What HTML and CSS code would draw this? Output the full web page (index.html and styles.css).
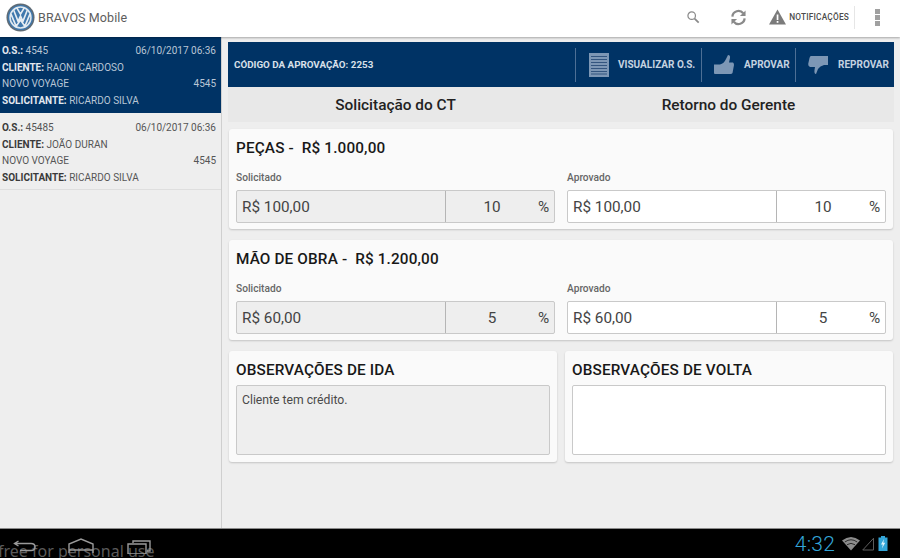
FILE: index.html
```html
<!DOCTYPE html>
<html lang="pt">
<head>
<meta charset="utf-8">
<title>BRAVOS Mobile</title>
<link rel="stylesheet" href="styles.css">
</head>
<body>
<div class="screen">
  <header class="topbar">
    <svg class="logo" width="29" height="29" viewBox="0 0 30 30">
      <circle cx="15" cy="15" r="14.5" fill="#5f6b75"/>
      <circle cx="15" cy="15" r="13" fill="#3f78ad"/>
      <circle cx="15" cy="15" r="10.8" fill="none" stroke="#dfe8ef" stroke-width="1.6"/>
      <path d="M8 7.5 L12.5 19 L15 13.5 L17.5 19 L22 7.5 M11 4.8 L15 11.5 L19 4.8 M5.2 11.5 L10.5 24 L15 17.5 L19.5 24 L24.8 11.5" fill="none" stroke="#e6edf3" stroke-width="1.7"/>
    </svg>
    <span class="apptitle">BRAVOS Mobile</span>
    <div class="actions">
      <svg class="a-search" width="14" height="14" viewBox="0 0 16 16"><circle cx="6.5" cy="6.5" r="4.3" fill="none" stroke="#8a8a8a" stroke-width="1.4"/><path d="M9.8 9.8 L14.5 14.5" stroke="#8a8a8a" stroke-width="2"/></svg>
      <svg class="a-sync" width="17" height="17" viewBox="0 0 18 18"><path d="M2.5 8 A6.5 6.5 0 0 1 14 4.5" fill="none" stroke="#8a8a8a" stroke-width="2.4"/><path d="M16.5 1.5 V7.5 H10.5 Z" fill="#8a8a8a"/><path d="M15.5 10 A6.5 6.5 0 0 1 4 13.5" fill="none" stroke="#8a8a8a" stroke-width="2.4"/><path d="M1.5 16.5 V10.5 H7.5 Z" fill="#8a8a8a"/></svg>
      <svg class="a-warn" width="17" height="16" viewBox="0 0 17 16"><path d="M8.5 0.5 L17 15.5 H0 Z" fill="#7b7b7b"/><rect x="7.7" y="5.5" width="1.7" height="5.5" fill="#fff"/><rect x="7.7" y="12" width="1.7" height="1.8" fill="#fff"/></svg>
      <span class="notif">NOTIFICAÇÕES</span>
      <span class="a-sep"></span>
      <span class="dots"><i></i><i></i><i></i></span>
    </div>
  </header>

  <div class="content">
    <aside class="sidebar">
      <article class="os os-active">
        <div class="os-row"><span><b>O.S.:</b> 4545</span><span>06/10/2017 06:36</span></div>
        <div class="os-row"><span><b>CLIENTE:</b> RAONI CARDOSO</span></div>
        <div class="os-row"><span>NOVO VOYAGE</span><span>4545</span></div>
        <div class="os-row"><span><b>SOLICITANTE:</b> RICARDO SILVA</span></div>
      </article>
      <article class="os">
        <div class="os-row"><span><b>O.S.:</b> 45485</span><span>06/10/2017 06:36</span></div>
        <div class="os-row"><span><b>CLIENTE:</b> JOÃO DURAN</span></div>
        <div class="os-row"><span>NOVO VOYAGE</span><span>4545</span></div>
        <div class="os-row"><span><b>SOLICITANTE:</b> RICARDO SILVA</span></div>
      </article>
    </aside>

    <main class="main">
      <div class="approval">
        <span class="code">CÓDIGO DA APROVAÇÃO: 2253</span>
        <div class="tool tool-view">
          <svg width="20" height="24" viewBox="0 0 20 24"><rect width="20" height="24" fill="#7d97b5"/><path d="M2 3.5H18M2 6.5H18M2 9.5H18M2 12.5H18M2 15.5H18M2 18.5H18M2 21H18" stroke="#33557f" stroke-width="1"/></svg>
          <span>VISUALIZAR O.S.</span>
        </div>
        <div class="tool tool-ok">
          <svg width="20" height="19" viewBox="0 0 20 19"><path d="M0 9.5 H6 Q10 8.5 12 4 L14 0 Q16.5 0 16 3 L15 7.5 H19 Q20 8 20 10 L18.5 18 Q18 19 16.5 19 H1 Q0 19 0 18 Z" fill="#7d97b5"/></svg>
          <span>APROVAR</span>
        </div>
        <div class="tool tool-no">
          <svg width="20" height="19" viewBox="0 0 20 19"><path d="M3 1 H20 V10 H16 Q12 11 10 14 L8 19 Q6 19 6.5 15 L7 12 H2 Q0 11 0.2 9 L1.5 3 Q2 1 3 1 Z" fill="#7d97b5"/></svg>
          <span>REPROVAR</span>
        </div>
      </div>
      <div class="columns-head"><span>Solicitação do CT</span><span>Retorno do Gerente</span></div>

      <section class="card">
        <h2>PEÇAS -&nbsp; R$ 1.000,00</h2>
        <div class="pair">
          <div>
            <div class="lbl">Solicitado</div>
            <div class="field field-off"><span class="val">R$ 100,00</span><span class="pct"><span class="num">10</span><span>%</span></span></div>
          </div>
          <div>
            <div class="lbl">Aprovado</div>
            <div class="field"><span class="val">R$ 100,00</span><span class="pct"><span class="num">10</span><span>%</span></span></div>
          </div>
        </div>
      </section>

      <section class="card">
        <h2>MÃO DE OBRA -&nbsp; R$ 1.200,00</h2>
        <div class="pair">
          <div>
            <div class="lbl">Solicitado</div>
            <div class="field field-off"><span class="val">R$ 60,00</span><span class="pct"><span class="num">5</span><span>%</span></span></div>
          </div>
          <div>
            <div class="lbl">Aprovado</div>
            <div class="field"><span class="val">R$ 60,00</span><span class="pct"><span class="num">5</span><span>%</span></span></div>
          </div>
        </div>
      </section>

      <div class="obs-row">
        <section class="obs">
          <h2>OBSERVAÇÕES DE IDA</h2>
          <div class="note note-off">Cliente tem crédito.</div>
        </section>
        <section class="obs">
          <h2>OBSERVAÇÕES DE VOLTA</h2>
          <div class="note"></div>
        </section>
      </div>
    </main>
  </div>

  <footer class="navbar">
    <span class="watermark">free for personal use</span>
    <svg class="n-back" width="23" height="13" viewBox="0 0 23 13"><path d="M5.5 1 L1.5 3.5 L5.5 6 M2 3.5 H18 Q22 3.5 22 7 Q22 10.5 18 10.5 H7" fill="none" stroke="#9a9a9a" stroke-width="1.4"/></svg>
    <svg class="n-home" width="26" height="15" viewBox="0 0 26 15"><path d="M1 15 V6 L13 1 L25 6 V15 M1 12 H25" fill="none" stroke="#9a9a9a" stroke-width="1.4"/></svg>
    <svg class="n-recent" width="24" height="14" viewBox="0 0 24 14"><path d="M6 3 V1 H23 V11 H20 M1 4 H19 V14 H1 Z" fill="none" stroke="#9a9a9a" stroke-width="1.4"/></svg>
    <div class="status">
      <span class="clock">4:32</span>
      <svg width="18" height="15" viewBox="0 0 18 14"><path d="M9 14 L0 4 Q9 -3 18 4 Z" fill="#8c8c8c"/><path d="M2.8 5.5 Q9 1 15.2 5.5 M5 8.2 Q9 5.5 13 8.2" fill="none" stroke="#222" stroke-width="0.9"/></svg>
      <svg width="12" height="14" viewBox="0 0 13 14"><path d="M12.5 0.8 V13.5 H0.8 Z" fill="none" stroke="#666" stroke-width="1"/></svg>
      <svg class="batt" width="10" height="15" viewBox="0 0 9 15"><rect x="2.5" width="4" height="2" fill="#33a5d8"/><rect y="1.5" width="9" height="13.5" fill="#33a5d8"/><path d="M5.5 3 L2.5 8.5 H4.3 L3.5 12.5 L6.7 6.8 H4.8 Z" fill="#dff3fb"/></svg>
    </div>
  </footer>
</div>
</body>
</html>
```

FILE: styles.css
```css
* { box-sizing: border-box; }
html, body { margin: 0; padding: 0; }
body { width: 900px; height: 558px; overflow: hidden; font-family: Roboto, "Liberation Sans", sans-serif; background: #eeeeee; }
.screen { width: 900px; height: 558px; display: flex; flex-direction: column; }

.topbar { height: 37px; background: #fff; display: flex; align-items: center; padding-left: 6px; box-shadow: 0 1px 2px rgba(0,0,0,.3); position: relative; z-index: 1; flex: none; }
.logo { margin-top: -3px; flex: none; }
.apptitle { margin-left: 3px; margin-top: -3px; font-size: 12.5px; color: #5d5d5d; letter-spacing: .1px; }
.actions { margin-left: auto; display: flex; align-items: center; height: 100%; margin-top: -3px; }
.a-search { margin-right: 30px; }
.a-sync { margin-right: 22px; }
.a-warn { margin-right: 3px; }
.notif { font-size: 8.3px; color: #4c4c4c; font-weight: 500; letter-spacing: .2px; }
.a-sep { width: 1px; height: 23px; background: #e6e6e6; margin: 0 20px 0 5px; }
.dots { display: flex; flex-direction: column; gap: 1px; margin-right: 20px; }
.dots i { display: block; width: 5px; height: 5px; background: #a0a0a0; }

.content { flex: 1; display: flex; min-height: 0; }
.sidebar { width: 222px; flex: none; border-right: 1.5px solid #cfcfcf; background: #eeeeee; }
.os { height: 77px; padding: 7.4px 5px 0 2px; border-bottom: 1px solid #dedede; color: #555; font-size: 10px; }
.os-active { height: 76px; background: #003365; color: #b9c6d5; border-bottom: 0; padding-top: 6.4px; }
.os b { font-weight: 700; color: #3a3a3a; }
.os-active b { color: #e2e8ef; }
.os-row { display: flex; justify-content: space-between; height: 16.4px; line-height: 15px; }

.main { flex: 1; min-width: 0; padding: 5px 6px 0 6px; }
.approval { height: 45px; background: #003365; display: flex; align-items: center; color: #dbe3ec; font-size: 10px; font-weight: 700; }
.code { margin-left: 6px; margin-right: auto; color: #d8e0ea; font-size: 9.8px; }
.tool { height: 34px; display: flex; align-items: center; border-left: 1px solid #4d6f95; color: #c5d2e0; }
.tool-view { width: 126px; padding-left: 13px; gap: 9px; }
.tool-ok { width: 94px; padding-left: 12px; gap: 10px; }
.tool-no { width: 99px; padding-left: 12px; gap: 10px; }
.columns-head { height: 35px; background: #e8e8e8; display: flex; align-items: center; font-size: 15.4px; font-weight: 500; color: #222; }
.columns-head span { flex: 1; text-align: center; }
.columns-head span:first-child { flex: none; width: 335px; }

.card, .obs { background: #fafafa; border-radius: 3px; box-shadow: 0 1px 2px rgba(0,0,0,.18); padding: 9px 7px 0 7px; }
.card { margin: 7px 1px 0 1px; height: 100px; }
.card + .card { margin-top: 11px; }
.card h2, .obs h2 { margin: 0; font-size: 15.3px; line-height: 20px; font-weight: 500; color: #181818; letter-spacing: .15px; }
.pair { display: flex; gap: 12px; margin-top: 13px; }
.pair > div { flex: 1; min-width: 0; }
.lbl { font-size: 10.2px; line-height: 14px; font-weight: 500; color: #666; }
.field { margin-top: 5px; height: 33px; display: flex; background: #fff; border: 1px solid #c9c9c9; border-radius: 2px; font-size: 15.3px; color: #444; line-height: 33px; }
.field-off { background: #eeeeee; }
.val { flex: 1; padding-left: 5px; border-right: 1px solid #b5b5b5; }
.pct { width: 108px; display: flex; }
.pct .num { width: 92px; text-align: center; }

.obs-row { display: flex; gap: 8px; margin: 11px 1px 0 1px; }
.obs { flex: 1; height: 111px; }
.note { margin-top: 5px; height: 70px; background: #fff; border: 1px solid #c9c9c9; border-radius: 2px; padding: 7px 5px; font-size: 12.2px; line-height: 14px; color: #4a4a4a; }
.note-off { background: #eeeeee; }

.navbar { height: 30px; background: #000; flex: none; position: relative; border-top: 1px solid #8a8a8a; display: flex; }
.watermark { position: absolute; left: -2px; top: 13px; font-family: "Noto Sans", sans-serif; font-size: 16px; line-height: 18px; color: #5a5a5a; white-space: nowrap; }
.navbar svg { position: relative; flex: none; }
.n-back { margin: 11px 0 0 13px; }
.n-home { margin: 9px 0 0 32px; }
.n-recent { margin: 11px 0 0 33px; }
.status { margin-left: auto; display: flex; align-items: center; padding-right: 12px; gap: 2px; }
.batt { margin-left: 2px; }
.clock { font-size: 21px; color: #33a5d8; margin-right: 5px; font-weight: 300; letter-spacing: .2px; }
```
